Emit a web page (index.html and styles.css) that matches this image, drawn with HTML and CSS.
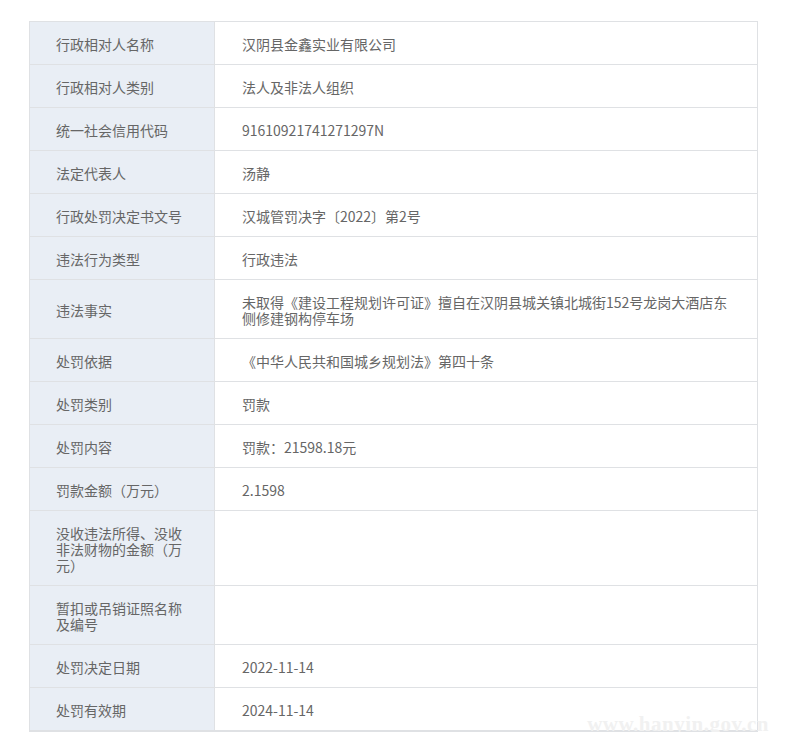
FILE: index.html
```html
<!DOCTYPE html>
<html lang="zh-CN">
<head>
<meta charset="utf-8">
<title>行政处罚信息</title>
<link rel="stylesheet" href="styles.css">
</head>
<body>
<div class="sheet">
  <div class="row"><div class="label">行政相对人名称</div><div class="value">汉阴县金鑫实业有限公司</div></div>
  <div class="row"><div class="label">行政相对人类别</div><div class="value">法人及非法人组织</div></div>
  <div class="row"><div class="label">统一社会信用代码</div><div class="value">91610921741271297N</div></div>
  <div class="row"><div class="label">法定代表人</div><div class="value">汤静</div></div>
  <div class="row"><div class="label">行政处罚决定书文号</div><div class="value">汉城管罚决字〔2022〕第2号</div></div>
  <div class="row"><div class="label">违法行为类型</div><div class="value">行政违法</div></div>
  <div class="row"><div class="label">违法事实</div><div class="value"><span>未取得《建设工程规划许可证》擅自在汉阴县城关镇北城街152号龙岗大酒店东<br>侧修建钢构停车场</span></div></div>
  <div class="row"><div class="label">处罚依据</div><div class="value">《中华人民共和国城乡规划法》第四十条</div></div>
  <div class="row"><div class="label">处罚类别</div><div class="value">罚款</div></div>
  <div class="row"><div class="label">处罚内容</div><div class="value">罚款：21598.18元</div></div>
  <div class="row"><div class="label">罚款金额（万元）</div><div class="value">2.1598</div></div>
  <div class="row"><div class="label">没收违法所得、没收非法财物的金额（万元）</div><div class="value"></div></div>
  <div class="row"><div class="label">暂扣或吊销证照名称及编号</div><div class="value"></div></div>
  <div class="row"><div class="label">处罚决定日期</div><div class="value">2022-11-14</div></div>
  <div class="row"><div class="label">处罚有效期</div><div class="value">2024-11-14</div></div>
  <div class="watermark">www.hanyin.gov.cn</div>
</div>
</body>
</html>
```

FILE: styles.css
```css
html, body {
  background: #ffffff;
}
body {
  margin: 21px 0 0 29px;
  font-family: "Noto Sans CJK SC", "Noto Sans", sans-serif;
  font-size: 14px;
  color: #666666;
}
.sheet {
  position: relative;
  width: 727px;
  border: 1px solid #dfe1e4;
}
.row {
  display: grid;
  grid-template-columns: 185px 1fr;
  border-bottom: 1px solid #dfe1e4;
}
.row:last-of-type {
  border-bottom: none;
}
.label,
.value {
  display: flex;
  align-items: center;
  line-height: 16px;
  min-height: 42px;
  padding: 14px 26px 12px 26px;
  box-sizing: border-box;
}
.label {
  background: #e9eef5;
  border-right: 1px solid #dfe1e4;
  padding-right: 24px;
}
.value {
  padding-left: 27px;
  padding-right: 20px;
}
.watermark {
  position: absolute;
  right: -12px;
  bottom: -6px;
  font-family: "Liberation Serif", serif;
  font-size: 21px;
  font-weight: bold;
  color: #f1f1f1;
  letter-spacing: 0.5px;
  pointer-events: none;
}
```
